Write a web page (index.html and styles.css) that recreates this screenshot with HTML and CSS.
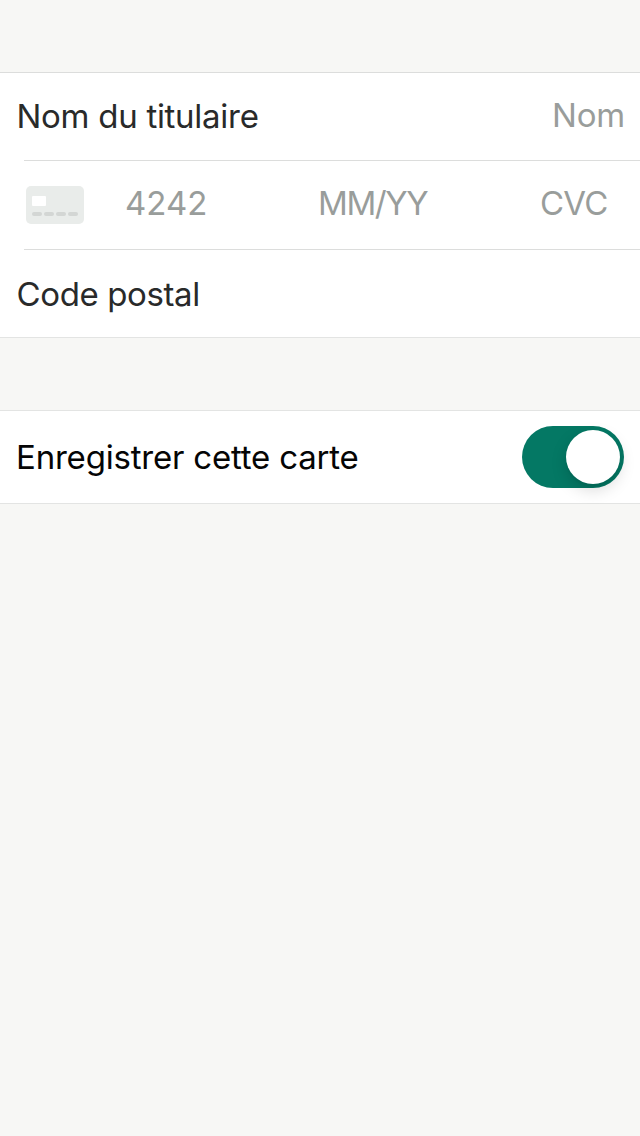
FILE: index.html
```html
<!DOCTYPE html>
<html lang="fr">
<head>
<meta charset="utf-8">
<title>Carte</title>
<link rel="stylesheet" href="styles.css">
</head>
<body>
<main class="screen">
  <section class="group">
    <div class="row row-name"><span class="label">Nom du titulaire</span><span class="hint holder">Nom</span></div>
    <div class="row row-card">
      <svg class="card" width="58" height="38" viewBox="0 0 58 38"><rect width="58" height="38" rx="5" fill="#e9ecea"/><rect x="6" y="10" width="14" height="10" rx="1" fill="#fff"/><g fill="#d3d6d4"><rect x="6" y="26" width="10" height="4" rx="2"/><rect x="18" y="26" width="10" height="4" rx="2"/><rect x="30" y="26" width="10" height="4" rx="2"/><rect x="42" y="26" width="10" height="4" rx="2"/></g></svg>
      <span class="hint number">4242</span><span class="hint expiry">MM/YY</span><span class="hint cvc">CVC</span>
    </div>
    <div class="row row-postal"><span class="label postal-label">Code postal</span></div>
  </section>
  <section class="group save">
    <span class="label save-label">Enregistrer cette carte</span>
    <span class="toggle"><span class="knob"></span></span>
  </section>
</main>
</body>
</html>
```
FILE: styles.css
```css
* { box-sizing: border-box; }
body { margin: 0; background: #f7f7f5; font-family: Inter, "Liberation Sans", sans-serif; font-size: 33px; line-height: 40px; }
.screen { min-height: 1136px; padding-top: 72px; }
.group { background: #fff; border-top: 1px solid #dcdddc; border-bottom: 1px solid #e3e4e3; }
.row { display: flex; height: 88px; white-space: nowrap; }
.row-name { padding: 23px 15px 0 16.5px; justify-content: space-between; }
.row-card { height: 90px; margin: -1px 0 0 24px; border-top: 1px solid #dcdddc; border-bottom: 1px solid #dcdddc; padding: 22px 0 0 2px; }
.row-postal { height: 87px; padding: 24px 16px 0 16.5px; }
.label { color: #292a2a; letter-spacing: -0.28px; }
.postal-label { letter-spacing: -0.38px; }
.hint { color: #999d9b; }
.holder { margin-top: -1px; letter-spacing: -0.2px; }
.card { margin-top: 3px; flex: none; }
.number { margin-left: 41px; width: 193px; }
.expiry { width: 222px; letter-spacing: -1.4px; }
.cvc { letter-spacing: -0.8px; }
.save { display: flex; justify-content: space-between; align-items: center; height: 94px; margin-top: 72px; padding: 0 16px; border-top-color: #e3e4e3; }
.save-label { color: #050505; letter-spacing: -0.2px; }
.toggle { display: flex; justify-content: flex-end; width: 102px; height: 62px; padding: 4px; border-radius: 31px; background: #047864; }
.knob { width: 54px; height: 54px; border-radius: 50%; background: #fff; box-shadow: 0 6px 16px rgba(0,0,0,.15), 0 3px 2px rgba(0,0,0,.04); }
```
